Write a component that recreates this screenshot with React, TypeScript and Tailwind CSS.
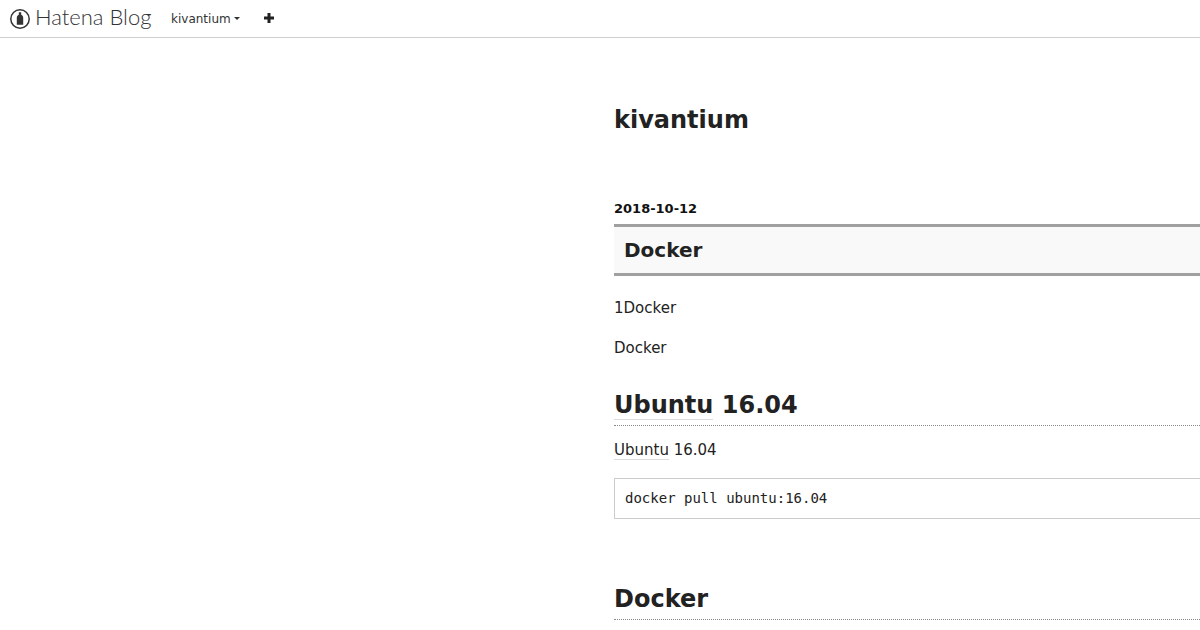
export default function App() {
  return (
    <div className="h-[630px] w-[1200px] overflow-hidden bg-white text-[#222] font-['DejaVu_Sans',sans-serif]">
      <header className="flex h-[38px] items-center border-b border-[#cfcfcf] pl-[10px]">
        <div className="flex items-center">
          <svg width="20" height="20" viewBox="0 0 20 20" className="text-[#333]">
            <circle cx="10" cy="10" r="9.200" fill="none" stroke="currentColor" strokeWidth="1.500" />
            <path d="M8.800 3.200h2.400v2.500c1.300.7 2 1.700 2 3.100v7H6.800v-7c0-1.400.7-2.400 2-3.100z" fill="currentColor" />
          </svg>
          <span className="ml-[5px] w-[117px] pb-[3px] font-['Lato',sans-serif] text-[22px] leading-none font-light whitespace-nowrap text-[#333]">Hatena Blog</span>
        </div>
        <div className="ml-[19px] flex items-center text-[12px] text-[#333]">
          <span>kivantium</span>
          <span className="ml-[3px] h-0 w-0 border-x-[3px] border-t-[3px] border-x-transparent border-t-[#333]" />
        </div>
        <svg width="10" height="10" viewBox="0 0 10 10" className="mb-[1px] ml-[24px]">
          <path d="M3.500 0h3v3.500H10v3H6.500V10h-3V6.500H0v-3h3.500z" fill="#222" />
        </svg>
      </header>
      <main className="ml-[614px] w-[800px] pt-[67px]">
        <h1 className="text-[24px] leading-[30px] font-bold">kivantium</h1>
        <div className="mt-[66px] text-[13px] leading-[16px] font-bold text-[#111]">2018-10-12</div>
        <h2 className="mt-[7px] flex h-[52px] items-center border-y-[3px] border-[#a0a0a0] bg-[#f9f9f9] pl-[10px] text-[20px] font-bold">Docker</h2>
        <p className="mt-[22px] text-[15px] leading-[20px]">1Docker</p>
        <p className="mt-[20px] text-[15px] leading-[20px]">Docker</p>
        <h3 className="mt-[32px] border-b border-dotted border-[#888] pb-[5px] text-[24px] leading-[30px] font-bold">
          <span className="border-b border-[#ddd]">Ubuntu</span> 16.04
        </h3>
        <p className="mt-[14px] text-[15px] leading-[20px]">
          <span className="border-b border-[#ddd]">Ubuntu</span> 16.04
        </p>
        <pre className="mt-[18px] flex h-[41px] items-center border border-[#ccc] pl-[10px] font-['DejaVu_Sans_Mono',monospace] text-[14px] text-[#222]">docker pull ubuntu:16.04</pre>
        <h3 className="mt-[65px] border-b border-dotted border-[#888] pb-[5px] text-[24px] leading-[30px] font-bold">Docker</h3>
      </main>
    </div>
  );
}
